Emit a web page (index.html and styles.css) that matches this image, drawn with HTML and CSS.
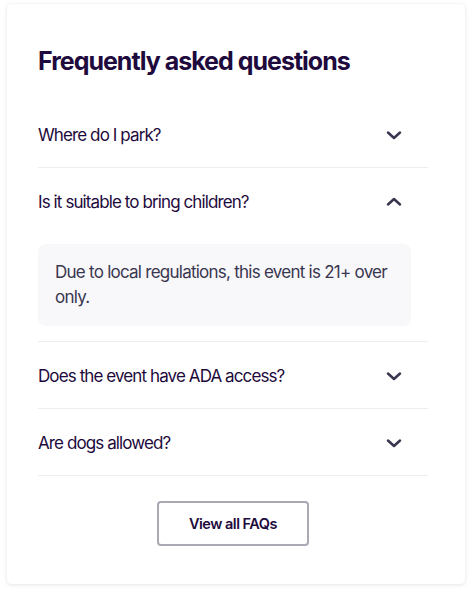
FILE: index.html
```html
<!DOCTYPE html>
<html lang="en">
<head>
<meta charset="utf-8">
<title>Frequently asked questions</title>
<link rel="stylesheet" href="styles.css">
</head>
<body>
<section class="faq-card">
  <h2 class="faq-title">Frequently asked questions</h2>
  <ul class="faq-list">
    <li class="faq-item">
      <div class="faq-question">
        <span>Where do I park?</span>
        <svg class="chevron" viewBox="0 0 16 16" width="16" height="16"><path d="M2 5.5 8 11 14 5.5"/></svg>
      </div>
    </li>
    <li class="faq-item open">
      <div class="faq-question">
        <span>Is it suitable to bring children?</span>
        <svg class="chevron" viewBox="0 0 16 16" width="16" height="16"><path d="M2 10.5 8 5 14 10.5"/></svg>
      </div>
      <div class="faq-answer">Due to local regulations, this event is 21+ over only.</div>
    </li>
    <li class="faq-item">
      <div class="faq-question">
        <span>Does the event have ADA access?</span>
        <svg class="chevron" viewBox="0 0 16 16" width="16" height="16"><path d="M2 5.5 8 11 14 5.5"/></svg>
      </div>
    </li>
    <li class="faq-item">
      <div class="faq-question">
        <span>Are dogs allowed?</span>
        <svg class="chevron" viewBox="0 0 16 16" width="16" height="16"><path d="M2 5.5 8 11 14 5.5"/></svg>
      </div>
    </li>
  </ul>
  <div class="faq-actions">
    <button class="faq-button" type="button">View all FAQs</button>
  </div>
</section>
</body>
</html>
```
FILE: styles.css
```css
html, body {
  margin: 0;
  padding: 0;
  background: #ffffff;
}

body {
  font-family: Inter, "Noto Sans", sans-serif;
  color: #1e0a3c;
  padding: 4px 9px 10px 7px;
}

.faq-card {
  background: #ffffff;
  border-radius: 4px;
  box-shadow: 0 1px 4px rgba(30, 10, 60, 0.10), 0 0 1px rgba(30, 10, 60, 0.08);
  padding: 40px 37px 38px 31px;
}

.faq-title {
  margin: 0 0 23px;
  font-size: 25px;
  line-height: 34px;
  font-weight: 700;
  letter-spacing: -1px;
  color: #1e0a3c;
}

.faq-list {
  list-style: none;
  margin: 0;
  padding: 0;
}

.faq-item {
  border-bottom: 1px solid #eeedf2;
}

.faq-question {
  display: flex;
  align-items: center;
  justify-content: space-between;
  padding: 22px 26px 20px 0;
  font-size: 17px;
  line-height: 24px;
  color: #1e0a3c;
  letter-spacing: -0.9px;
}

.chevron {
  fill: none;
  stroke: #39364f;
  stroke-width: 2.5;
  stroke-linecap: round;
  stroke-linejoin: round;
}

.faq-answer {
  margin: 10px 17px 15px 0;
  padding: 16px 8px 16px 17px;
  background: #f8f7fa;
  border-radius: 8px;
  font-size: 17px;
  line-height: 25px;
  color: #39364f;
  letter-spacing: -0.75px;
}

.faq-actions {
  display: flex;
  justify-content: center;
  padding-top: 25px;
}

.faq-button {
  width: 152px;
  height: 45px;
  background: #ffffff;
  border: 2px solid #a9a8b3;
  border-radius: 4px;
  font-family: Inter, "Noto Sans", sans-serif;
  font-size: 14.5px;
  font-weight: 600;
  color: #1e0a3c;
  letter-spacing: -0.5px;
}
```
